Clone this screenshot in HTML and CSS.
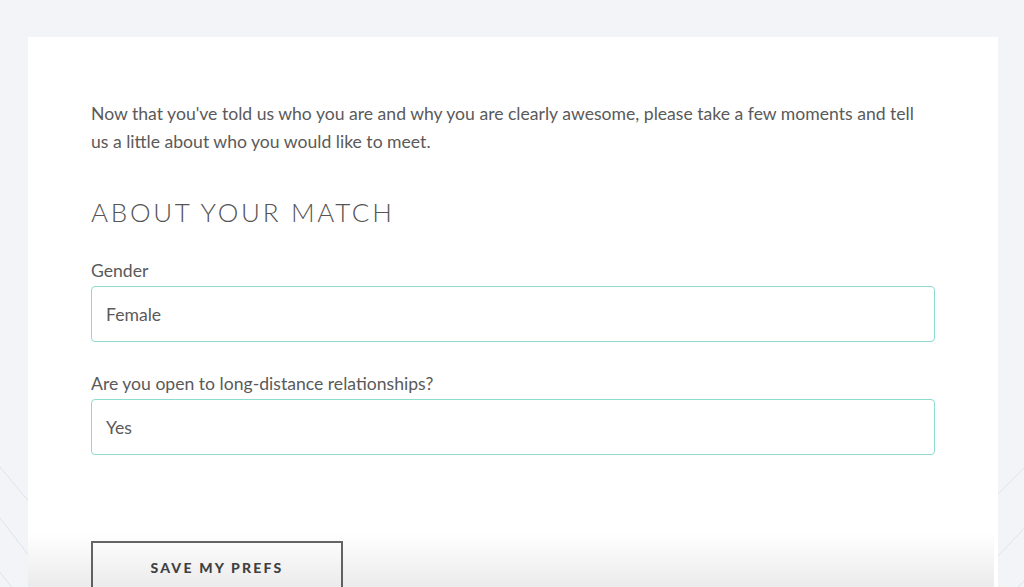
FILE: index.html
```html
<!DOCTYPE html>
<html lang="en">
<head>
<meta charset="utf-8">
<title>About your match</title>
<link rel="stylesheet" href="styles.css">
</head>
<body>
<svg class="bg-lines" width="1024" height="587" viewBox="0 0 1024 587" aria-hidden="true">
  <g stroke="#dfe3ea" stroke-width="1" fill="none">
    <line x1="-10" y1="455" x2="30" y2="503"/>
    <line x1="-10" y1="505" x2="30" y2="557"/>
    <line x1="-10" y1="560" x2="30" y2="610"/>
    <line x1="996" y1="496" x2="1034" y2="458"/>
    <line x1="996" y1="558" x2="1034" y2="518"/>
    <line x1="1010" y1="595" x2="1034" y2="571"/>
  </g>
</svg>
<main class="card">
  <p class="intro">Now that you've told us who you are and why you are clearly awesome, please take a few moments and tell us a little about who you would like to meet.</p>
  <h2 class="section-title">ABOUT YOUR MATCH</h2>
  <div class="field">
    <label class="field-label">Gender</label>
    <div class="field-box">Female</div>
  </div>
  <div class="field">
    <label class="field-label">Are you open to long-distance relationships?</label>
    <div class="field-box">Yes</div>
  </div>
  <button class="save-btn" type="button">SAVE MY PREFS</button>
</main>
<div class="bottom-fade"></div>
</body>
</html>
```
FILE: styles.css
```css
* { box-sizing: border-box; }
html, body { height: 100%; }
body {
  margin: 0;
  background: #f2f4f8;
  font-family: Lato, "Open Sans", sans-serif;
  color: #555;
  overflow: hidden;
  position: relative;
}
.bg-lines {
  position: absolute;
  left: 0;
  top: 0;
  z-index: 0;
}
.card {
  position: relative;
  z-index: 1;
  margin: 37px 26px 0 28px;
  background: #fff;
  padding: 63px 63px 60px 63px;
  display: flex;
  flex-direction: column;
  min-height: 700px;
}
.intro {
  margin: 0;
  font-size: 17.6px;
  line-height: 28px;
  font-weight: 400;
  color: #5a5a5a;
}
.section-title {
  margin: 38px 0 29px;
  font-size: 26px;
  line-height: 36px;
  font-weight: 300;
  letter-spacing: 2.7px;
  color: #555;
}
.field {
  display: flex;
  flex-direction: column;
  gap: 3px;
  margin-bottom: 30px;
}
.field-label {
  font-size: 17.6px;
  line-height: 24px;
  color: #5a5a5a;
}
.field-box {
  height: 56px;
  border: 1px solid #8edbd0;
  border-radius: 4px;
  padding: 0 14px;
  display: flex;
  align-items: center;
  font-size: 17.6px;
  color: #5a5a5a;
}
.save-btn {
  align-self: flex-start;
  margin-top: 56px;
  width: 252px;
  height: 52px;
  background: #fff;
  border: 2px solid #666;
  font-family: Lato, "Open Sans", sans-serif;
  font-weight: 900;
  font-size: 14px;
  letter-spacing: 2.2px;
  color: #444;
  padding: 0;
}
.bottom-fade {
  position: absolute;
  left: 28px;
  right: 30px;
  bottom: 0;
  height: 55px;
  z-index: 2;
  pointer-events: none;
  background: linear-gradient(to bottom, rgba(0,0,0,0) 0%, rgba(0,0,0,0.08) 100%);
}
```
